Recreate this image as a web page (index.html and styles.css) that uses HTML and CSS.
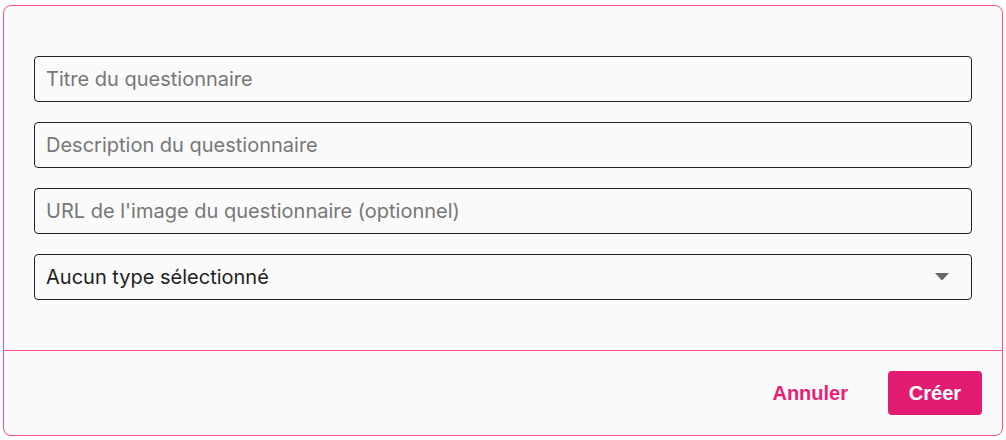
FILE: index.html
```html
<!DOCTYPE html>
<html lang="fr">
<head>
<meta charset="utf-8">
<link rel="stylesheet" href="styles.css">
</head>
<body>
<div class="card">
  <div class="card-body">
    <div class="field"><input class="input" type="text" placeholder="Titre du questionnaire"></div>
    <div class="field"><input class="input" type="text" placeholder="Description du questionnaire"></div>
    <div class="field"><input class="input" type="text" placeholder="URL de l'image du questionnaire (optionnel)"></div>
    <div class="field select">
      <span class="select-value">Aucun type sélectionné</span>
      <svg class="caret" width="14" height="8" viewBox="0 0 14 8"><path d="M0 0H14L7 7.5Z" fill="#666"/></svg>
    </div>
  </div>
  <div class="card-footer">
    <button class="btn btn-text">Annuler</button>
    <button class="btn btn-primary">Créer</button>
  </div>
</div>
</body>
</html>
```
FILE: styles.css
```css
html, body { margin: 0; background: #ffffff; }
body { padding: 5px 0 0 3px; font-family: Inter, "Noto Sans", sans-serif; }
.card {
  box-sizing: border-box;
  width: 1000px;
  height: 431px;
  border: 1px solid #ff4d8f;
  border-radius: 8px;
  background: #fafafa;
  display: flex;
  flex-direction: column;
}
.card-body {
  padding: 50px 30px;
  display: flex;
  flex-direction: column;
  gap: 20px;
}
.field {
  box-sizing: border-box;
  height: 46px;
  border: 1px solid #222;
  border-radius: 4px;
  display: flex;
  align-items: center;
}
.input {
  flex: 1;
  border: 0;
  outline: none;
  background: transparent;
  font-family: Inter, "Noto Sans", sans-serif;
  font-size: 20px;
  color: #222;
  padding: 0 11px;
  height: 100%;
}
.input::placeholder { color: #777; }
.select { justify-content: space-between; padding: 0 22px 0 11px; }
.select-value { font-size: 20px; color: #1e1e1e; }
.caret { display: block; }
.card-footer {
  flex: 1;
  border-top: 1px solid #ff4d8f;
  display: flex;
  justify-content: flex-end;
  align-items: center;
  gap: 24px;
  padding: 0 20px;
}
.btn {
  font-family: "Liberation Sans", Arial, sans-serif;
  font-weight: bold;
  font-size: 20px;
  border: 0;
  border-radius: 4px;
  height: 44px;
  cursor: pointer;
}
.btn-text { background: transparent; color: #e91e74; padding: 0 16px; }
.btn-primary { background: #e31c72; color: #fff; width: 94px; }
```
